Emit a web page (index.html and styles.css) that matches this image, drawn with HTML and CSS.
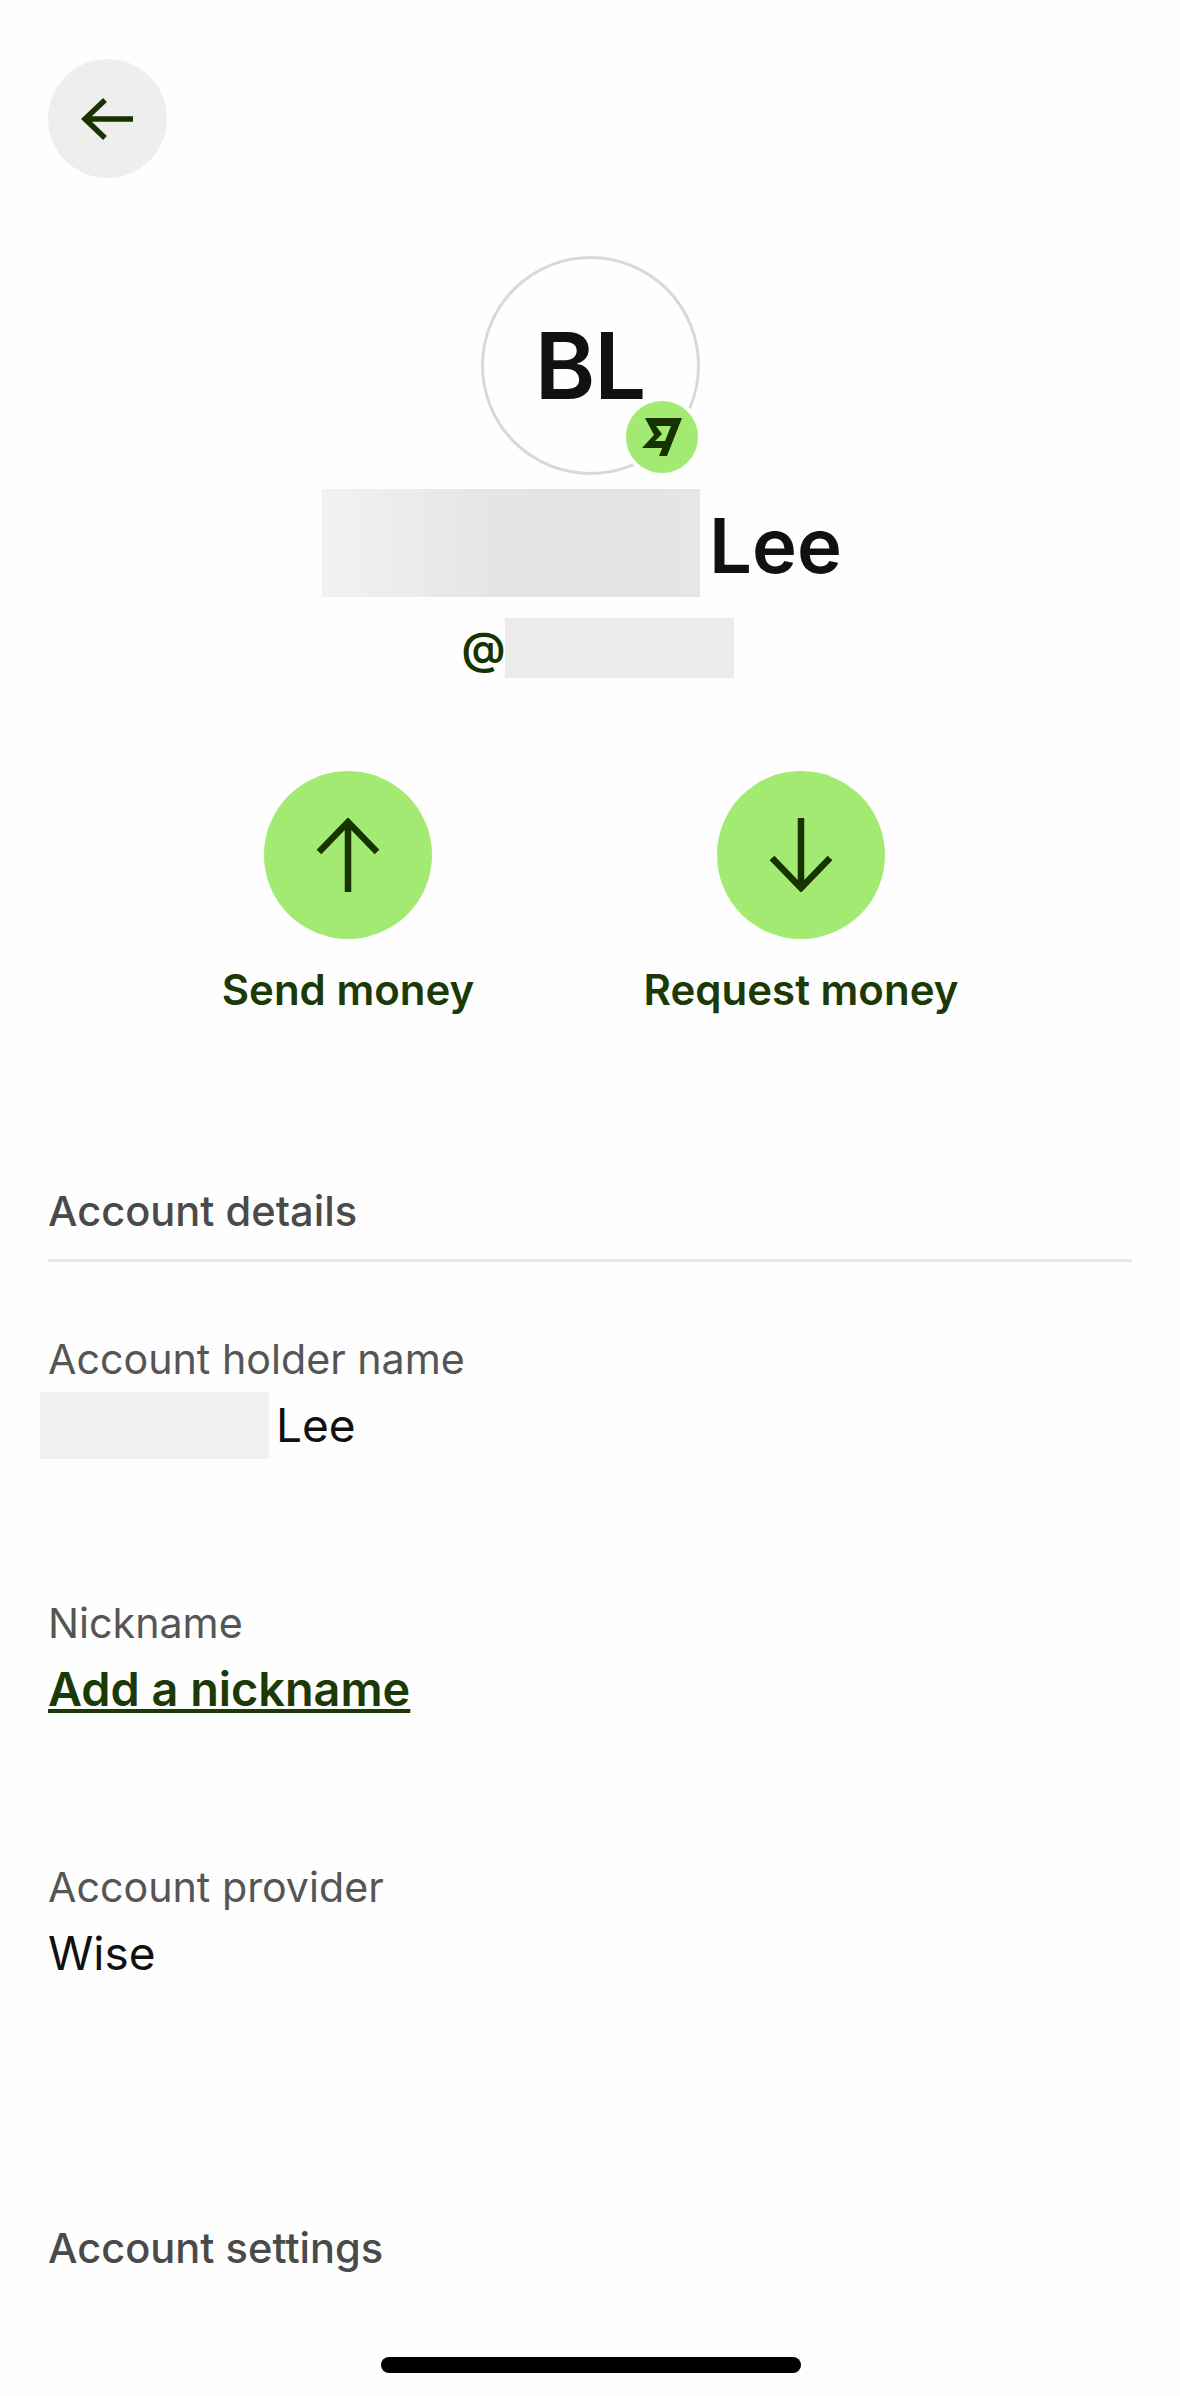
FILE: index.html
```html
<!DOCTYPE html>
<html lang="en">
<head>
<meta charset="utf-8">
<title>Account details</title>
<link rel="stylesheet" href="styles.css">
</head>
<body>
<main class="page">
  <button class="back" aria-label="Back">
    <svg width="56" height="46" viewBox="0 0 56 46"><path d="M53 23H5M25 4 5 23l20 19" class="stroke stroke-back"/></svg>
  </button>

  <section class="profile">
    <div class="avatar">
      <span class="initials">BL</span>
      <span class="badge">
        <svg width="40" height="40" viewBox="0 0 40 40"><path class="flag" d="M3 1h37L25 39h-8L29 9H14l6 8-7 7h11l-3 7H0l12-13z"/></svg>
      </span>
    </div>
    <h1 class="name"><span class="mask mask-name"></span><span class="name-text">Lee</span></h1>
    <div class="handle"><span class="at">@</span><span class="mask mask-handle"></span></div>
  </section>

  <section class="actions">
    <a class="action">
      <span class="action-circle"><svg width="64" height="74" viewBox="0 0 64 74"><path class="stroke" d="M32 74V4M3 34 32 4l29 30"/></svg></span>
      <span class="action-label">Send money</span>
    </a>
    <a class="action">
      <span class="action-circle"><svg width="64" height="74" viewBox="0 0 64 74"><path class="stroke" d="M32 0v70M3 40l29 30 29-30"/></svg></span>
      <span class="action-label">Request money</span>
    </a>
  </section>

  <section class="details">
    <h2 class="section-title">Account details</h2>
    <div class="field">
      <div class="field-label">Account holder name</div>
      <div class="field-value"><span class="mask mask-holder"></span><span>Lee</span></div>
    </div>
    <div class="field">
      <div class="field-label">Nickname</div>
      <a class="field-link">Add a nickname</a>
    </div>
    <div class="field">
      <div class="field-label">Account provider</div>
      <div class="field-value">Wise</div>
    </div>
  </section>

  <h2 class="settings-title">Account settings</h2>
  <div class="home-indicator"></div>
</main>
</body>
</html>
```

FILE: styles.css
```css
* { box-sizing: border-box; }
html, body { margin: 0; padding: 0; background: #fefefe; }
.page {
  position: relative;
  width: 1180px;
  height: 2396px;
  padding: 59px 48px 0;
  overflow: hidden;
  font-family: Inter, "Liberation Sans", sans-serif;
  color: #111;
}
.stroke { fill: none; stroke: #163300; stroke-width: 6.5; stroke-linejoin: miter; }
.stroke-back { stroke-width: 5.5; }
.flag { fill: #163300; }
.back {
  display: flex;
  align-items: center;
  justify-content: center;
  width: 119px;
  height: 119px;
  padding: 0;
  border: 0;
  border-radius: 50%;
  background: #eeefec;
}
.profile { display: flex; flex-direction: column; align-items: center; margin-top: 78px; }
.avatar {
  position: relative;
  display: flex;
  align-items: center;
  justify-content: center;
  width: 219px;
  height: 219px;
  border: 3px solid #d8d8d6;
  border-radius: 50%;
}
.initials { font-size: 92px; line-height: 1; font-weight: 600; letter-spacing: -1px; }
.badge {
  position: absolute;
  right: -5px;
  bottom: -5px;
  display: flex;
  align-items: center;
  justify-content: center;
  width: 80px;
  height: 80px;
  border: 4px solid #fefefe;
  border-radius: 50%;
  background: #a2ea72;
}
.name {
  display: flex;
  align-items: center;
  gap: 9px;
  height: 108px;
  margin: 14px 0 0;
  padding-right: 16px;
  font-size: 76px;
  font-weight: 600;
  line-height: 108px;
}
.name-text { padding-top: 3px; }
.mask { display: block; flex: none; }
.mask-name { width: 378px; height: 108px; background: linear-gradient(90deg, #f2f2f1, #e5e6e3 45%, #e3e4e1 80%, #e6e7e4); }
.handle { display: flex; align-items: center; height: 60px; margin-top: 21px; padding-left: 16px; color: #163300; }
.at { font-size: 44px; font-weight: 600; line-height: 60px; }
.mask-handle { width: 229px; height: 60px; background: #ebecea; }
.actions { display: flex; justify-content: center; gap: 169px; margin-top: 93px; padding-right: 31px; }
.action { display: flex; flex-direction: column; align-items: center; width: 284px; }
.action-circle {
  display: flex;
  align-items: center;
  justify-content: center;
  width: 168px;
  height: 168px;
  border-radius: 50%;
  background: #a2ea72;
}
.action-label {
  margin-top: 26px;
  font-size: 42px;
  font-weight: 600;
  line-height: 50px;
  color: #1c3a06;
  white-space: nowrap;
}
.details { margin-top: 172px; }
.section-title, .settings-title {
  margin: 0;
  font-size: 41.6px;
  font-weight: 450;
  line-height: 48px;
  color: #4a4a4a;
}
.section-title { padding-bottom: 24px; border-bottom: 3px solid #e8e8e8; }
.field { height: 264px; padding-top: 66px; }
.field-label { font-size: 41.2px; line-height: 62px; color: #555; }
.field-value { display: flex; align-items: center; gap: 7px; height: 68px; margin-top: 1px; font-size: 46px; color: #111; }
.mask-holder { width: 229px; height: 67px; margin-left: -8px; background: #f1f1f1; }
.field-link { display: block; height: 68px; margin-top: 1px; font-size: 46.8px; line-height: 68px; font-weight: 600; color: #1c3a06; text-decoration: underline; }
.settings-title { margin-top: 170px; }
.home-indicator {
  position: absolute;
  left: 381px;
  top: 2357px;
  width: 420px;
  height: 16px;
  border-radius: 8px;
  background: #000;
}
```
